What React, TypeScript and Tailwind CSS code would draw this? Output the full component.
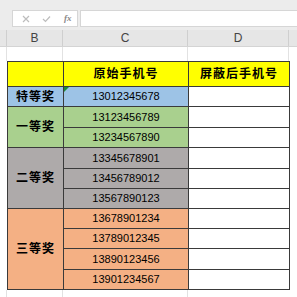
import React from "react";

const groups = [
  { label: "特等奖", bg: "bg-[#9dc3e6]", rows: ["13012345678"], heights: [19] },
  { label: "一等奖", bg: "bg-[#a9d08e]", rows: ["13123456789", "13234567890"], heights: [20, 19] },
  {
    label: "二等奖",
    bg: "bg-[#aeaaaa]",
    rows: ["13345678901", "13456789012", "13567890123"],
    heights: [20, 19, 19],
  },
  {
    label: "三等奖",
    bg: "bg-[#f4b084]",
    rows: ["13678901234", "13789012345", "13890123456", "13901234567"],
    heights: [19, 19, 20, 19],
  },
];

const font = "font-['Liberation_Sans','Noto_Sans_CJK_SC',sans-serif]";

export default function App() {
  const rowHeights = groups.flatMap((g) => g.heights);
  let rowIndex = 2;

  return (
    <div className={`w-[297px] h-[297px] overflow-hidden bg-white ${font}`}>
      {/* formula bar */}
      <div className="h-[30px] bg-[#ececec] pt-[10px] flex">
        <div className="ml-[12px] w-[66px] h-[17px] bg-white border border-[#d6d6d6] flex items-center">
          <svg className="ml-[9px]" width="8" height="8" viewBox="0 0 8 8">
            <path d="M1 1L7 7M7 1L1 7" stroke="#bdbdbd" strokeWidth="1.2" />
          </svg>
          <svg className="ml-[12px]" width="9" height="8" viewBox="0 0 9 8">
            <path d="M1 4L3.5 6.5L8 1.5" stroke="#bdbdbd" strokeWidth="1.2" fill="none" />
          </svg>
          <span className="ml-[13px] text-[9px] italic font-bold text-[#8a8a8a] font-['Liberation_Serif',serif]">fx</span>
        </div>
        <div className="ml-[2px] flex-1 h-[17px] bg-white border border-[#d6d6d6] border-r-0" />
      </div>

      {/* column headers */}
      <div className="h-[17px] bg-[#e6e6e6] flex text-[12px] text-[#444] border-b border-[#d4d4d4]">
        <div className="w-[7px] border-r border-[#cfcfcf]" />
        <div className="w-[56px] border-r border-[#cfcfcf] flex items-center justify-center">B</div>
        <div className="w-[125px] border-r border-[#cfcfcf] flex items-center justify-center">C</div>
        <div className="w-[101px] border-r border-[#cfcfcf] flex items-center justify-center">D</div>
        <div className="flex-1" />
      </div>

      {/* blank row */}
      <div className="h-[14px] flex">
        <div className="w-[7px] border-r border-[#e2e2e2]" />
        <div className="w-[56px] border-r border-[#e2e2e2]" />
        <div className="w-[125px] border-r border-[#e2e2e2]" />
        <div className="w-[101px] border-r border-[#e2e2e2]" />
      </div>

      {/* table */}
      <div className="flex">
        <div className="w-[7px] shrink-0" />
        <div
          className="grid grid-cols-[55px_124px_100px] gap-px bg-[#3a3a3a] p-px w-[283px] shrink-0"
          style={{ gridTemplateRows: `24px ${rowHeights.map((h) => `${h}px`).join(" ")}` }}
        >
          <div className="bg-[#ffff00]" />
          <div className="bg-[#ffff00] flex items-center justify-center text-[12px] font-bold text-black tracking-[1px]">
            原始手机号
          </div>
          <div className="bg-[#ffff00] flex items-center justify-center text-[12px] font-bold text-black tracking-[1px]">
            屏蔽后手机号
          </div>

          {groups.map((g) => {
            const start = rowIndex;
            rowIndex += g.rows.length;
            return (
              <React.Fragment key={g.label}>
                <div
                  className={`${g.bg} col-start-1 flex items-center justify-center text-[12px] font-bold text-black tracking-[1px]`}
                  style={{ gridRow: `${start} / span ${g.rows.length}` }}
                >
                  {g.label}
                </div>
                {g.rows.map((n, i) => (
                  <React.Fragment key={n}>
                    <div
                      className={`${g.bg} col-start-2 relative flex items-center justify-center text-[11px] text-black`}
                      style={{ gridRow: `${start + i}` }}
                    >
                      {g.label === "特等奖" && (
                        <span className="absolute left-0 top-0 w-0 h-0 border-t-[5px] border-t-[#1e8c3a] border-r-[5px] border-r-transparent" />
                      )}
                      {n}
                    </div>
                    <div className="bg-white col-start-3" style={{ gridRow: `${start + i}` }} />
                  </React.Fragment>
                ))}
              </React.Fragment>
            );
          })}
        </div>
      </div>
      <div className="h-[10px] flex">
        <div className="w-[7px] border-r border-[#e2e2e2]" />
        <div className="w-[56px] border-r border-[#e2e2e2]" />
        <div className="w-[125px] border-r border-[#e2e2e2]" />
        <div className="w-[101px]" />
      </div>
    </div>
  );
}
